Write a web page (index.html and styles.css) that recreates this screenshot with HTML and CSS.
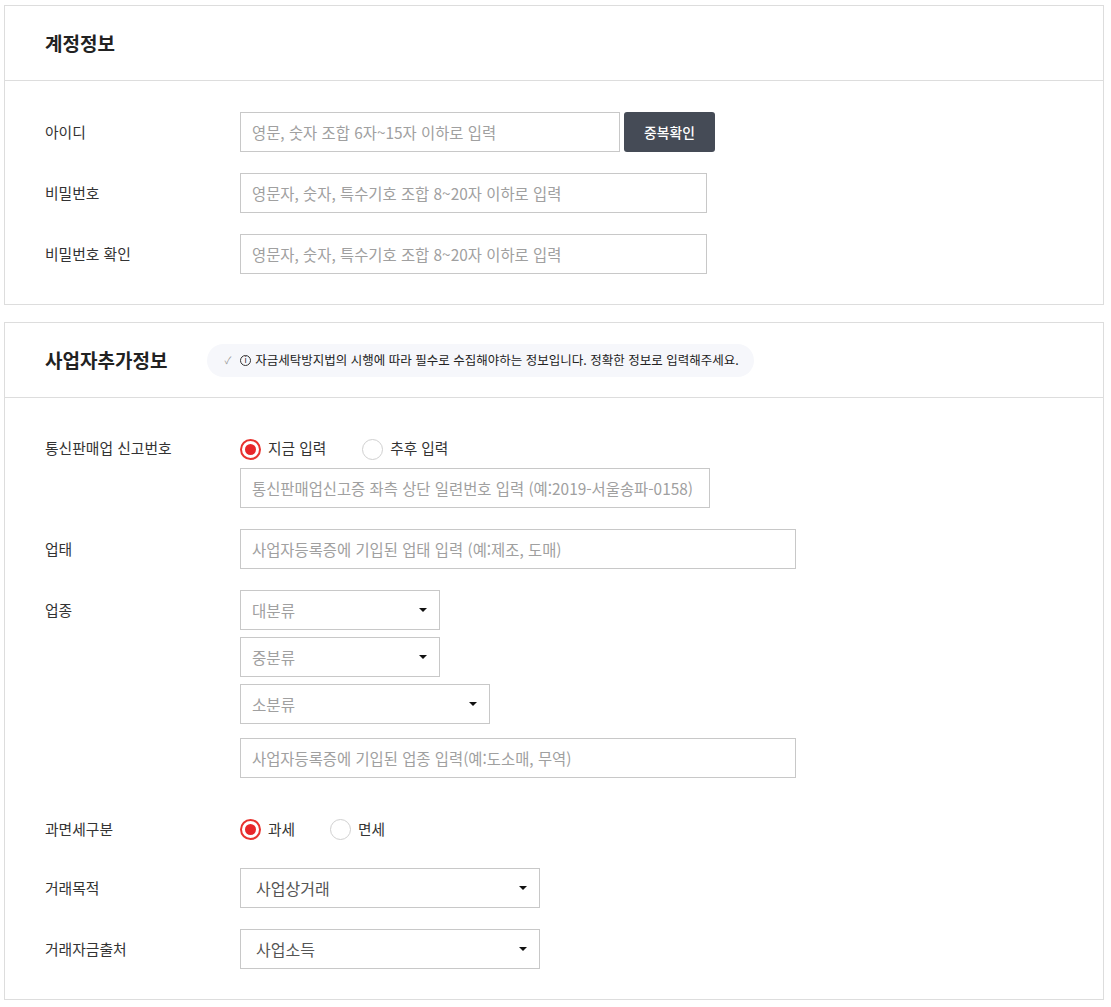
FILE: index.html
```html
<!DOCTYPE html>
<html lang="ko">
<head>
<meta charset="utf-8">
<title>계정정보</title>
<link rel="stylesheet" href="styles.css">
</head>
<body>
<div class="page">
  <section class="card">
    <header class="card-head">
      <h2 class="card-title">계정정보</h2>
    </header>
    <div class="card-body">
      <div class="row">
        <div class="label">아이디</div>
        <div class="field field-inline">
          <input class="input w380" type="text" placeholder="영문, 숫자 조합 6자~15자 이하로 입력">
          <button class="btn-dark" type="button">중복확인</button>
        </div>
      </div>
      <div class="row">
        <div class="label">비밀번호</div>
        <div class="field">
          <input class="input w467" type="password" placeholder="영문자, 숫자, 특수기호 조합 8~20자 이하로 입력">
        </div>
      </div>
      <div class="row">
        <div class="label">비밀번호 확인</div>
        <div class="field">
          <input class="input w467" type="password" placeholder="영문자, 숫자, 특수기호 조합 8~20자 이하로 입력">
        </div>
      </div>
    </div>
  </section>

  <section class="card card-second">
    <header class="card-head">
      <h2 class="card-title">사업자추가정보</h2>
      <div class="notice">
        <span class="notice-check">✓</span>
        <span class="notice-info">i</span>
        <span class="notice-text">자금세탁방지법의 시행에 따라 필수로 수집해야하는 정보입니다. 정확한 정보로 입력해주세요.</span>
      </div>
    </header>
    <div class="card-body">
      <div class="row">
        <div class="label">통신판매업 신고번호</div>
        <div class="field">
          <div class="radios">
            <label class="radio"><span class="radio-dot checked"></span><span class="radio-text">지금 입력</span></label>
            <label class="radio"><span class="radio-dot"></span><span class="radio-text">추후 입력</span></label>
          </div>
          <input class="input w470" type="text" placeholder="통신판매업신고증 좌측 상단 일련번호 입력 (예:2019-서울송파-0158)">
        </div>
      </div>
      <div class="row">
        <div class="label">업태</div>
        <div class="field">
          <input class="input w556" type="text" placeholder="사업자등록증에 기입된 업태 입력 (예:제조, 도매)">
        </div>
      </div>
      <div class="row">
        <div class="label">업종</div>
        <div class="field">
          <div class="select w200 placeholder"><span class="select-text">대분류</span></div>
          <div class="select w200 placeholder mt7"><span class="select-text">중분류</span></div>
          <div class="select w250 placeholder mt7"><span class="select-text">소분류</span></div>
          <input class="input w556 mt14" type="text" placeholder="사업자등록증에 기입된 업종 입력(예:도소매, 무역)">
        </div>
      </div>
      <div class="row row-tax">
        <div class="label label-tax">과면세구분</div>
        <div class="field">
          <div class="radios radios-tax">
            <label class="radio"><span class="radio-dot checked"></span><span class="radio-text">과세</span></label>
            <label class="radio"><span class="radio-dot"></span><span class="radio-text">면세</span></label>
          </div>
        </div>
      </div>
      <div class="row">
        <div class="label">거래목적</div>
        <div class="field">
          <div class="select w300 value"><span class="select-text">사업상거래</span></div>
        </div>
      </div>
      <div class="row">
        <div class="label">거래자금출처</div>
        <div class="field">
          <div class="select w300 value"><span class="select-text">사업소득</span></div>
        </div>
      </div>
    </div>
  </section>
</div>
</body>
</html>
```

FILE: styles.css
```css
* {
  box-sizing: border-box;
}

body {
  margin: 0;
  background: #ffffff;
  font-family: "Noto Sans CJK KR", "Noto Sans", sans-serif;
  color: #333333;
}

.page {
  padding: 5px 4px 0 4px;
  width: 1108px;
}

.card {
  width: 1100px;
  border: 1px solid #dddddd;
  background: #ffffff;
}

.card-second {
  margin-top: 17px;
}

.card-head {
  height: 75px;
  border-bottom: 1px solid #dddddd;
  padding-left: 40px;
  display: flex;
  align-items: center;
}

.card-title {
  margin: 0;
  font-size: 19px;
  font-weight: 700;
  line-height: 24px;
  color: #222222;
}

.notice {
  margin-left: 40px;
  height: 33px;
  padding: 0 15px 0 17px;
  border-radius: 17px;
  background: #f6f7fb;
  display: flex;
  align-items: center;
  font-size: 12.5px;
  line-height: 16px;
  color: #222222;
}

.notice-check {
  font-size: 10px;
  color: #999999;
  margin-right: 9px;
}

.notice-info {
  width: 11px;
  height: 11px;
  border: 1px solid #333333;
  border-radius: 50%;
  font-size: 8px;
  line-height: 9px;
  text-align: center;
  font-family: "DejaVu Sans", sans-serif;
  margin-right: 4px;
}

.card-body {
  padding: 31px 40px 30px 40px;
  display: flex;
  flex-direction: column;
  gap: 21px;
}

.card-second .card-body {
  padding-top: 30px;
}

.row {
  display: flex;
  align-items: flex-start;
}

.label {
  width: 195px;
  flex-shrink: 0;
  font-size: 14.8px;
  line-height: 40px;
  color: #333333;
}

.field {
  display: flex;
  flex-direction: column;
  align-items: flex-start;
}

.field-inline {
  flex-direction: row;
  gap: 4px;
}

.input {
  height: 40px;
  border: 1px solid #c8c8c8;
  border-radius: 0;
  padding: 0 8px 0 11px;
  font-family: inherit;
  font-size: 15.4px;
  color: #555555;
  background: #ffffff;
  outline: none;
}

.input::placeholder {
  color: #a0a0a0;
}

.w380 { width: 380px; }
.w467 { width: 467px; }
.w470 { width: 470px; }
.w556 { width: 556px; }
.w200 { width: 200px; }
.w250 { width: 250px; }
.w300 { width: 300px; }

.mt7 { margin-top: 7px; }
.mt14 { margin-top: 14px; }

.btn-dark {
  width: 91px;
  height: 40px;
  border: none;
  border-radius: 3px;
  background: #454b56;
  color: #ffffff;
  font-family: inherit;
  font-size: 13.8px;
  font-weight: 500;
}

.radios {
  height: 40px;
  display: flex;
  align-items: center;
  gap: 36px;
}

.row-tax {
  margin-top: 11px;
}

.label-tax {
  line-height: 37px;
}

.radios-tax {
  height: 37px;
  gap: 35px;
}

.radio {
  display: flex;
  align-items: center;
  gap: 7px;
  font-size: 14.7px;
  line-height: 20px;
  color: #333333;
}

.radio-dot {
  width: 21px;
  height: 21px;
  border-radius: 50%;
  border: 1px solid #d0d0d0;
  background: #ffffff;
  position: relative;
  margin-top: 2px;
}

.radio-dot.checked {
  border: 2px solid #e8332f;
}

.radio-dot.checked::after {
  content: "";
  position: absolute;
  left: 3px;
  top: 3px;
  width: 11px;
  height: 11px;
  border-radius: 50%;
  background: #e8262a;
}

.select {
  height: 40px;
  border: 1px solid #c8c8c8;
  background: #ffffff;
  display: flex;
  align-items: center;
  position: relative;
  font-size: 15.6px;
}

.select::after {
  content: "";
  position: absolute;
  right: 12px;
  top: 17px;
  border-left: 4px solid transparent;
  border-right: 4px solid transparent;
  border-top: 4px solid #111111;
}

.select.placeholder {
  padding-left: 11px;
  color: #a0a0a0;
}

.select.value {
  padding-left: 15px;
  font-size: 16px;
  color: #555555;
}
```
